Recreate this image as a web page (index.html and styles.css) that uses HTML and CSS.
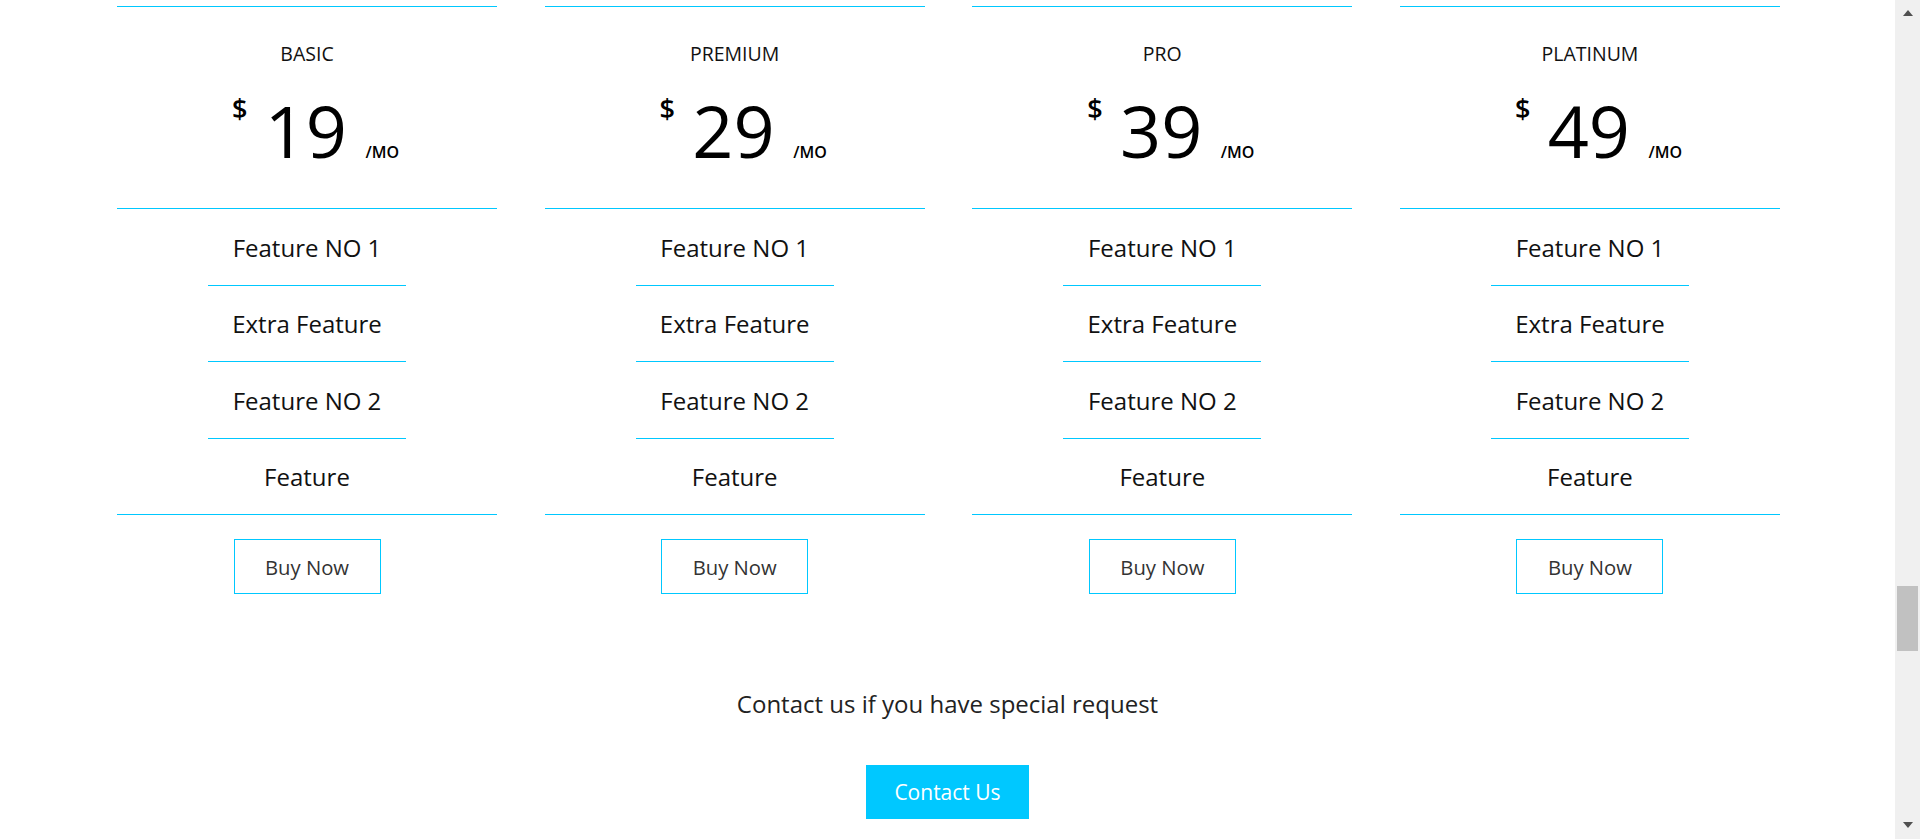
FILE: index.html
```html
<!DOCTYPE html>
<html lang="en">
<head>
<meta charset="utf-8">
<title>Pricing</title>
<link rel="stylesheet" href="styles.css">
</head>
<body>
<div class="page">
  <main class="container">
    <section class="pricing">
      <div class="plan">
        <div class="plan-head">
          <h3 class="plan-name">BASIC</h3>
          <div class="price"><span class="cur">$</span><span class="amount">19</span><span class="per">/MO</span></div>
        </div>
        <ul class="features">
          <li>Feature NO 1</li>
          <li>Extra Feature</li>
          <li>Feature NO 2</li>
          <li>Feature</li>
        </ul>
        <a class="buy" href="#">Buy Now</a>
      </div>
      <div class="plan">
        <div class="plan-head">
          <h3 class="plan-name">PREMIUM</h3>
          <div class="price"><span class="cur">$</span><span class="amount">29</span><span class="per">/MO</span></div>
        </div>
        <ul class="features">
          <li>Feature NO 1</li>
          <li>Extra Feature</li>
          <li>Feature NO 2</li>
          <li>Feature</li>
        </ul>
        <a class="buy" href="#">Buy Now</a>
      </div>
      <div class="plan">
        <div class="plan-head">
          <h3 class="plan-name">PRO</h3>
          <div class="price"><span class="cur">$</span><span class="amount">39</span><span class="per">/MO</span></div>
        </div>
        <ul class="features">
          <li>Feature NO 1</li>
          <li>Extra Feature</li>
          <li>Feature NO 2</li>
          <li>Feature</li>
        </ul>
        <a class="buy" href="#">Buy Now</a>
      </div>
      <div class="plan">
        <div class="plan-head">
          <h3 class="plan-name">PLATINUM</h3>
          <div class="price"><span class="cur">$</span><span class="amount">49</span><span class="per">/MO</span></div>
        </div>
        <ul class="features">
          <li>Feature NO 1</li>
          <li>Extra Feature</li>
          <li>Feature NO 2</li>
          <li>Feature</li>
        </ul>
        <a class="buy" href="#">Buy Now</a>
      </div>
    </section>
    <section class="contact">
      <p class="contact-text">Contact us if you have special request</p>
      <a class="contact-btn" href="#">Contact Us</a>
    </section>
  </main>
</div>
<div class="scrollbar">
  <div class="arrow-up"></div>
  <div class="track"><div class="thumb"></div></div>
  <div class="arrow-down"></div>
</div>
</body>
</html>
```

FILE: styles.css
```css
html, body {
  margin: 0;
  padding: 0;
}
body {
  display: flex;
  height: 839px;
  overflow: hidden;
  background: #fff;
  font-family: "Open Sans", "Liberation Sans", sans-serif;
  color: #222;
}
.page {
  flex: 1;
  min-width: 0;
}
.container {
  padding: 6px 0 0 117px;
  width: 1664px;
}
.pricing {
  display: grid;
  grid-template-columns: repeat(4, 380px);
  column-gap: 47.67px;
}
.plan {
  display: flex;
  flex-direction: column;
  align-items: center;
}
.plan-head {
  align-self: stretch;
  border-top: 1px solid #00c8ff;
  border-bottom: 1px solid #00c8ff;
  padding: 33.4px 0 29px;
  text-align: center;
}
.plan-name {
  margin: 0;
  font-size: 19.5px;
  font-weight: 400;
  line-height: normal;
  color: #111;
}
.price {
  margin-top: 14px;
  padding-left: 17px;
  display: flex;
  justify-content: center;
  align-items: baseline;
  color: #000;
}
.cur {
  align-self: flex-start;
  margin-top: 8.5px;
  margin-right: 17.3px;
  font-size: 27px;
  font-weight: 600;
}
.amount {
  font-size: 72px;
  line-height: normal;
}
.per {
  margin-left: 18.5px;
  font-size: 16px;
  font-weight: 600;
}
.features {
  align-self: stretch;
  margin: 0;
  padding: 0;
  list-style: none;
  border-bottom: 1px solid #00c8ff;
  display: flex;
  flex-direction: column;
  align-items: center;
}
.features li {
  width: 198px;
  height: 75.5px;
  display: flex;
  align-items: center;
  justify-content: center;
  font-size: 24px;
  color: #111;
  border-bottom: 1px solid #00c8ff;
}
.features li:last-child {
  border-bottom: 0;
}
.buy {
  margin-top: 24px;
  width: 145px;
  height: 53px;
  border: 1px solid #00c8ff;
  display: flex;
  align-items: center;
  justify-content: center;
  font-size: 20.25px;
  color: #333;
  text-decoration: none;
}
.contact {
  display: flex;
  flex-direction: column;
  align-items: center;
  padding: 93px 3px 0 0;
}
.contact-text {
  margin: 0;
  font-size: 24px;
  line-height: normal;
  color: #222;
}
.contact-btn {
  margin-top: 45px;
  width: 163px;
  height: 54px;
  background: #00c8ff;
  color: #fff;
  font-size: 21px;
  display: flex;
  align-items: center;
  justify-content: center;
  text-decoration: none;
}
.scrollbar {
  width: 25px;
  flex: none;
  background: #f0f0f0;
  display: flex;
  flex-direction: column;
  align-items: center;
}
.arrow-up, .arrow-down {
  width: 0;
  height: 0;
  border-left: 5px solid transparent;
  border-right: 5px solid transparent;
}
.arrow-up {
  margin-top: 10px;
  border-bottom: 6px solid #505050;
}
.arrow-down {
  margin-bottom: 11px;
  border-top: 6px solid #505050;
}
.track {
  flex: 1;
  align-self: stretch;
  padding: 0 2px;
}
.thumb {
  margin-top: 570px;
  height: 65px;
  background: #c1c1c1;
}
```
